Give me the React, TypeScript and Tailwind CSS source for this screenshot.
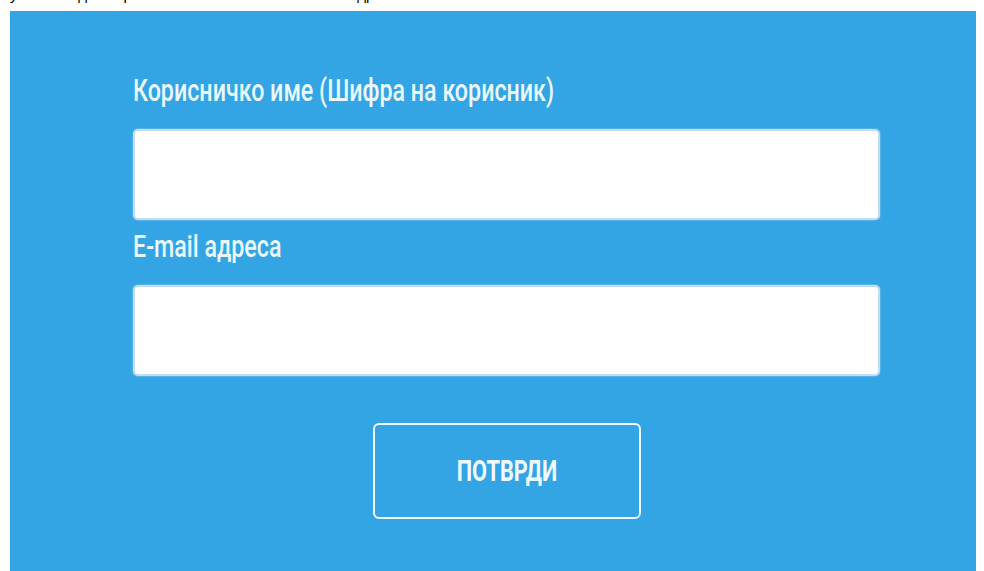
const labelFont = {
  fontFamily: '"Roboto", "Liberation Sans", sans-serif',
};

function Field({ label, id, type = "text" }: { label: string; id: string; type?: string }) {
  return (
    <div className="flex flex-col">
      <label
        htmlFor={id}
        className="block h-[54px] whitespace-nowrap text-[31px] font-medium leading-[32px] text-[#e9f8fd]"
        style={labelFont}
      >
        <span className="inline-block origin-left scale-x-[0.75]">{label}</span>
      </label>
      <input
        id={id}
        type={type}
        className="h-[91px] w-full rounded-[5px] border-2 border-[#c3dcee] bg-white px-4 text-lg outline-none shadow-[0_0_2px_rgba(255,255,255,0.6)]"
      />
    </div>
  );
}

export default function App() {
  return (
    <div className="min-h-[571px] bg-white">
      {/* tail of the previous line, cut off by the viewport */}
      <div className="h-[11px] overflow-hidden pl-[10px]">
        <p className="-mt-[15px] text-[15px] leading-[20px] text-black" style={{ fontFamily: '"Liberation Sans", sans-serif' }}>
          у ќе ви биде испратена нова лозинка на вашата адреса
        </p>
      </div>

      <section className="ml-[10px] h-[560px] w-[966px] bg-[#33a4e4] pl-[123px] pr-[96px] pt-[64px]">
        <form className="flex flex-col" onSubmit={(e) => e.preventDefault()}>
          <Field id="username" label="Корисничко име (Шифра на корисник)" />
          <div className="h-[11px]" />
          <Field id="email" type="email" label="E-mail адреса" />

          <div className="flex justify-center pt-[47px]">
            <button
              type="submit"
              className="flex h-[96px] w-[268px] items-center justify-center rounded-[6px] border-2 border-[#eefaff] text-[29px] font-bold leading-none text-[#eefaff]"
              style={labelFont}
            >
              <span className="inline-block scale-x-[0.75]">ПОТВРДИ</span>
            </button>
          </div>
        </form>
      </section>
    </div>
  );
}
